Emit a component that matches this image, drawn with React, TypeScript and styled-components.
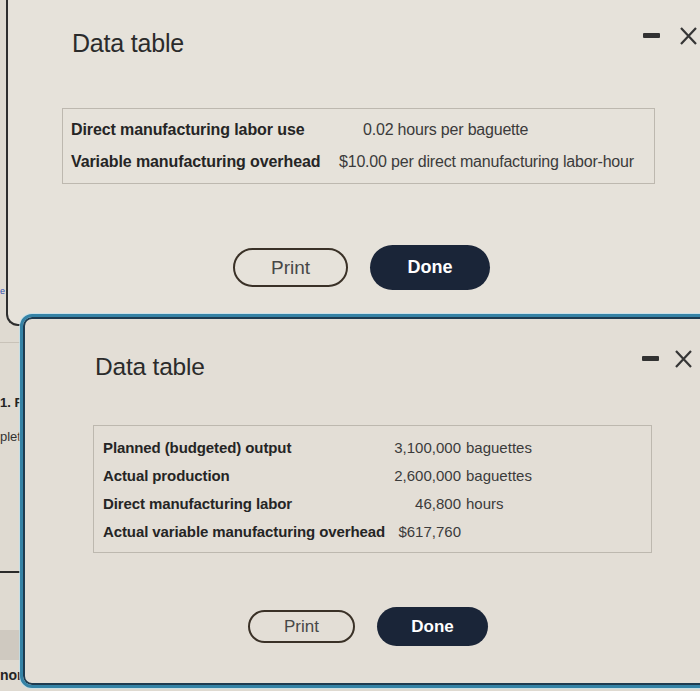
import React from 'react'
import styled, { createGlobalStyle } from 'styled-components'

const GlobalStyle = createGlobalStyle`
  html, body {
    margin: 0;
    padding: 0;
  }
  body {
    width: 700px;
    height: 691px;
    overflow: hidden;
    background: #dfdad1;
    font-family: "Liberation Sans", Arial, sans-serif;
  }
  * { box-sizing: border-box; }
`

type Row = { label: string; value: string; indent?: number }
type SplitRow = { label: string; amount: string; unit?: string }

const laborRows: Row[] = [
    { label: 'Direct manufacturing labor use', value: '0.02 hours per baguette', indent: 24 },
    { label: 'Variable manufacturing overhead', value: '$10.00 per direct manufacturing labor-hour' },
]

const productionRows: SplitRow[] = [
    { label: 'Planned (budgeted) output', amount: '3,100,000', unit: 'baguettes' },
    { label: 'Actual production', amount: '2,600,000', unit: 'baguettes' },
    { label: 'Direct manufacturing labor', amount: '46,800', unit: 'hours' },
    { label: 'Actual variable manufacturing overhead', amount: '$617,760' },
]

function WindowControls({ offset, gap }: { offset: number; gap: number }) {
    return (
        <Controls $offset={offset} $gap={gap}>
            <Minimize />
            <svg width="17" height="18" viewBox="0 0 17 18">
                <path d="M1 1 L16 17 M16 1 L1 17" stroke="#363636" strokeWidth="2.2" fill="none" />
            </svg>
        </Controls>
    )
}

export default function App() {
    return (
        <>
            <GlobalStyle />
            <Page>
                <TopRow>
                    <Gutter>
                        <LinkBit>e</LinkBit>
                    </Gutter>
                    <BackDialog>
                        <Header>
                            <Title $size={25} $indent={10}>Data table</Title>
                            <WindowControls offset={-2} gap={20} />
                        </Header>
                        <LaborTable>
                            {laborRows.map(r => (
                                <LaborRow key={r.label}>
                                    <Label $size={16}>{r.label}</Label>
                                    <Value $size={16} style={{ paddingLeft: r.indent ?? 0 }}>{r.value}</Value>
                                </LaborRow>
                            ))}
                        </LaborTable>
                        <ButtonRow $top={61} $left={171}>
                            <Button $w={115} $h={39} $fs={19}>Print</Button>
                            <Button $primary $w={120} $h={45} $fs={18}>Done</Button>
                        </ButtonRow>
                    </BackDialog>
                </TopRow>

                <BottomRow>
                    <SideStrip>
                        <ThinRule />
                        <StepText>1. F</StepText>
                        <Clipped>plet</Clipped>
                        <DarkRule />
                        <GrayBand />
                        <MoreText>nore</MoreText>
                    </SideStrip>
                    <FrontDialog>
                        <Header>
                            <Title $size={24.5} $indent={2}>Data table</Title>
                            <WindowControls offset={-3} gap={16} />
                        </Header>
                        <ProductionTable>
                            {productionRows.map(r => (
                                <ProductionRow key={r.label}>
                                    <Label $size={15}>{r.label}</Label>
                                    <Amount>{r.amount}</Amount>
                                    <Unit>{r.unit ?? ''}</Unit>
                                </ProductionRow>
                            ))}
                        </ProductionTable>
                        <ButtonRow $top={54} $left={155}>
                            <Button $w={107} $h={33} $fs={17}>Print</Button>
                            <Button $primary $w={111} $h={39} $fs={17}>Done</Button>
                        </ButtonRow>
                    </FrontDialog>
                </BottomRow>
            </Page>
        </>
    )
}

const Page = styled.div`
    display: flex;
    flex-direction: column;
    width: 700px;
    height: 691px;
    overflow: hidden;
`

const TopRow = styled.div`
    display: flex;
    height: 326px;
    flex: none;
`

const Gutter = styled.div`
    width: 6px;
    flex: none;
    display: flex;
    flex-direction: column;
    padding-top: 284px;
`

const LinkBit = styled.span`
    font-size: 9px;
    line-height: 14px;
    color: #3552b0;
`

const BackDialog = styled.div`
    flex: none;
    width: 711px;
    height: 100%;
    background: #e6e2da;
    border-left: 2px solid #2e2e2e;
    border-bottom: 2px solid #2e2e2e;
    border-bottom-left-radius: 12px;
    padding: 28px 20px 0 54px;
    display: flex;
    flex-direction: column;
`

const Header = styled.div`
    display: flex;
    justify-content: space-between;
    align-items: flex-start;
`

const Title = styled.h2<{ $size: number; $indent: number }>`
    margin: 0 0 0 ${p => p.$indent}px;
    font-size: ${p => p.$size}px;
    line-height: 30px;
    font-weight: 400;
    color: #2b2b2b;
    letter-spacing: -0.2px;
`

const Controls = styled.div<{ $offset: number; $gap: number }>`
    display: flex;
    align-items: center;
    gap: ${p => p.$gap}px;
    margin-top: ${p => p.$offset}px;
    height: 19px;
`

const Minimize = styled.span`
    display: block;
    width: 17px;
    height: 5px;
    border-radius: 1px;
    background: #323232;
`

const LaborTable = styled.div`
    margin-top: 50px;
    width: 593px;
    border: 1px solid #bdb8af;
    padding: 5px 8px;
`

const LaborRow = styled.div`
    display: grid;
    grid-template-columns: 268px 1fr;
    align-items: center;
    height: 32px;
`

const Label = styled.span<{ $size: number }>`
    font-size: ${p => p.$size}px;
    font-weight: 700;
    color: #252525;
    letter-spacing: -0.1px;
    white-space: nowrap;
`

const Value = styled.span<{ $size: number }>`
    font-size: ${p => p.$size}px;
    color: #3b3b3b;
    letter-spacing: -0.2px;
    white-space: nowrap;
`

const ButtonRow = styled.div<{ $top: number; $left: number }>`
    display: flex;
    align-items: center;
    gap: 22px;
    margin-top: ${p => p.$top}px;
    padding-left: ${p => p.$left}px;
`

const Button = styled.button<{ $primary?: boolean; $w: number; $h: number; $fs: number }>`
    width: ${p => p.$w}px;
    height: ${p => p.$h}px;
    border-radius: ${p => p.$h / 2}px;
    font-family: "Liberation Sans", Arial, sans-serif;
    font-size: ${p => p.$fs}px;
    font-weight: ${p => (p.$primary ? 700 : 400)};
    color: ${p => (p.$primary ? '#ffffff' : '#474747')};
    background: ${p => (p.$primary ? '#1a2538' : 'transparent')};
    border: ${p => (p.$primary ? 'none' : '2px solid #3a3127')};
    padding: 0;
    cursor: pointer;
`

const BottomRow = styled.div`
    display: flex;
    margin-top: -12px;
    flex: none;
    height: 374px;
`

const SideStrip = styled.div`
    width: 20px;
    flex: none;
    display: flex;
    flex-direction: column;
    font-size: 13px;
    line-height: 18px;
    color: #242424;
`

const ThinRule = styled.div`
    margin-top: 28px;
    height: 1px;
    background: #c8c2b8;
`

const StepText = styled.span`
    margin-top: 51px;
    font-weight: 700;
    white-space: nowrap;
`

const Clipped = styled.span`
    margin-top: 16px;
    color: #333;
    white-space: nowrap;
`

const DarkRule = styled.div`
    margin-top: 125px;
    height: 2px;
    margin-right: -4px;
    background: #2a2a2a;
`

const GrayBand = styled.div`
    margin-top: 57px;
    height: 30px;
    background: #cfc9c0;
`

const MoreText = styled.span`
    margin-top: 6px;
    font-size: 14px;
    font-weight: 700;
    white-space: nowrap;
`

const FrontDialog = styled.div`
    position: relative;
    z-index: 1;
    flex: none;
    width: 696px;
    height: 100%;
    background: #e3ded6;
    border: 3px solid #3583a6;
    border-radius: 12px;
    box-shadow: inset 0 0 0 2px #1e3b50, 0 0 0 1px rgba(190, 225, 238, 0.7);
    padding: 35px 21px 0 70px;
    display: flex;
    flex-direction: column;
`

const ProductionTable = styled.div`
    margin-top: 43px;
    width: 559px;
    border: 1px solid #bdb8af;
    padding: 7px 9px;
`

const ProductionRow = styled.div`
    display: grid;
    grid-template-columns: 290px 68px auto;
    align-items: center;
    height: 28px;
`

const Amount = styled.span`
    font-size: 15px;
    color: #3b3b3b;
    text-align: right;
    white-space: nowrap;
`

const Unit = styled.span`
    font-size: 15px;
    color: #3b3b3b;
    padding-left: 5px;
    white-space: nowrap;
`
